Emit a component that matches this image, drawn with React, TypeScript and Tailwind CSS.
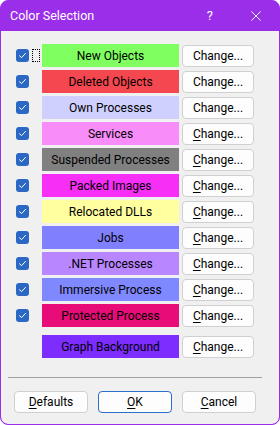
import React from 'react';

type Row = { label: string; color: string; checked: boolean; underline: boolean };

const rows: Row[] = [
  { label: 'New Objects', color: 'bg-[#80ff60]', checked: true, underline: false },
  { label: 'Deleted Objects', color: 'bg-[#f5474f]', checked: true, underline: false },
  { label: 'Own Processes', color: 'bg-[#d0d0ff]', checked: true, underline: false },
  { label: 'Services', color: 'bg-[#f88cf8]', checked: true, underline: true },
  { label: 'Suspended Processes', color: 'bg-[#808080]', checked: true, underline: true },
  { label: 'Packed Images', color: 'bg-[#f62ef6]', checked: true, underline: true },
  { label: 'Relocated DLLs', color: 'bg-[#ffffa0]', checked: true, underline: true },
  { label: 'Jobs', color: 'bg-[#8080ff]', checked: true, underline: true },
  { label: '.NET Processes', color: 'bg-[#b886ff]', checked: true, underline: true },
  { label: 'Immersive Process', color: 'bg-[#8088ff]', checked: true, underline: true },
  { label: 'Protected Process', color: 'bg-[#e80c78]', checked: true, underline: true },
];

const Check: React.FC = () => (
  <div className="w-[13px] h-[13px] rounded-[3px] bg-[#2b67c4] flex items-center justify-center">
    <svg width="9" height="9" viewBox="0 0 9 9" fill="none">
      <path d="M1.5 4.8 L3.6 6.6 L7.5 2.4" stroke="white" strokeWidth="1" strokeLinecap="round" strokeLinejoin="round" />
    </svg>
  </div>
);

const ChangeButton: React.FC<{ underline: boolean }> = ({ underline }) => (
  <button className="w-[72px] h-[22px] ml-[3px] rounded-[4px] border border-[#d0d0d0] bg-[#fdfdfd] text-[12px] text-black leading-none">
    {underline ? <span className="underline underline-offset-2">C</span> : 'C'}hange...
  </button>
);

const App: React.FC = () => {
  return (
    <div
      className="w-[280px] h-[425px] flex flex-col rounded-[8px] border border-[#9b2fe9] bg-[#9b2fe9] overflow-hidden"
      style={{ fontFamily: 'Roboto, "Noto Sans", sans-serif' }}
    >
      <div className="h-[30px] flex items-center text-white text-[12.5px] pl-[9px] pr-[18px] shrink-0">
        <span className="flex-1">Color Selection</span>
        <span className="mr-[38px] text-[13px]">?</span>
        <svg width="10" height="10" viewBox="0 0 10 10">
          <path d="M0.5 0.5 L9.5 9.5 M9.5 0.5 L0.5 9.5" stroke="white" strokeWidth="1" />
        </svg>
      </div>
      <div className="flex-1 flex flex-col bg-[#f0f0f0] rounded-b-[7px] pt-[13px] pl-[15px]">
        {rows.map((r, i) => (
          <div key={r.label} className="flex items-center h-[23px] mb-[3px]">
            <div className="w-[26px] flex items-center">
              {r.checked && <Check />}
              {i === 0 && <div className="ml-[3px] w-[8px] h-[13px] border border-dotted border-black" />}
            </div>
            <div className={`w-[137px] h-[23px] ${r.color} flex items-center justify-center text-[12px] text-black`}>
              {r.label}
            </div>
            <ChangeButton underline={r.underline} />
          </div>
        ))}
        <div className="flex items-center h-[23px] mt-[5px]">
          <div className="w-[26px]" />
          <div className="w-[137px] h-[23px] bg-[#7d2dff] flex items-center justify-center text-[12px] text-black">
            Graph Background
          </div>
          <ChangeButton underline={true} />
        </div>
        <div className="mt-[19px] -ml-[8px] w-[254px] h-px bg-[#a0a0a0]" />
        <div className="flex mt-[13px] -ml-[2px] gap-[10px] text-[12px] text-black">
          <button className="w-[74px] h-[22px] rounded-[4px] border border-[#d0d0d0] bg-[#fdfdfd] leading-none">
            <span className="underline underline-offset-2">D</span>efaults
          </button>
          <button className="w-[74px] h-[22px] rounded-[4px] border border-[#2a6fc9] bg-[#fdfdfd] leading-none">
            <span className="underline underline-offset-2">O</span>K
          </button>
          <button className="w-[74px] h-[22px] rounded-[4px] border border-[#d0d0d0] bg-[#fdfdfd] leading-none">
            <span className="underline underline-offset-2">C</span>ancel
          </button>
        </div>
      </div>
    </div>
  );
};

export default App;
